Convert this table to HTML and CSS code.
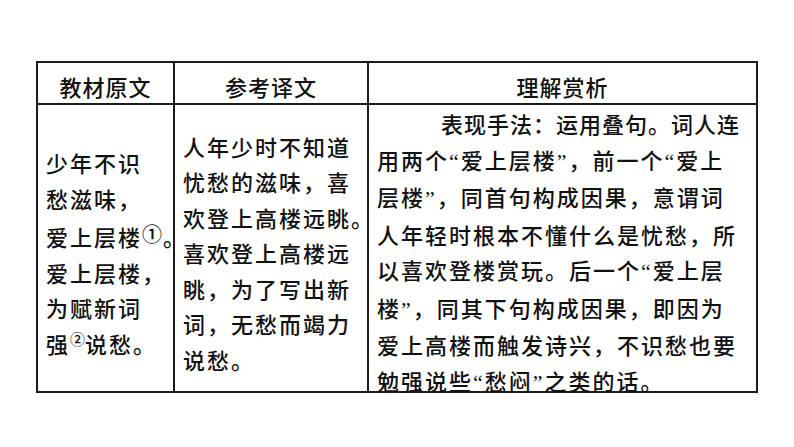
FILE: index.html
```html
<!DOCTYPE html>
<html lang="zh-CN">
<head>
<meta charset="utf-8">
<title>教材原文</title>
<link rel="stylesheet" href="styles.css">
</head>
<body>
<div class="table">
  <div class="head">教材原文</div>
  <div class="head">参考译文</div>
  <div class="head">理解赏析</div>
  <div class="cell c1">
    <div class="lines">
      <div>少年不识</div>
      <div>愁滋味，</div>
      <div>爱上层楼<span class="note">①</span>。</div>
      <div>爱上层楼，</div>
      <div>为赋新词</div>
      <div>强<sup class="sup">②</sup>说愁。</div>
    </div>
  </div>
  <div class="cell c2">
    <div class="lines">
      <div>人年少时不知道</div>
      <div>忧愁的滋味，喜</div>
      <div>欢登上高楼远眺。</div>
      <div>喜欢登上高楼远</div>
      <div>眺，为了写出新</div>
      <div>词，无愁而竭力</div>
      <div>说愁。</div>
    </div>
  </div>
  <div class="cell c3">
    <div class="lines">
      <div class="indent">表现手法：运用叠句。词人连</div>
      <div>用两个<span class="q">“</span>爱上层楼<span class="q">”</span>，前一个<span class="q">“</span>爱上</div>
      <div>层楼<span class="q">”</span>，同首句构成因果，意谓词</div>
      <div>人年轻时根本不懂什么是忧愁，所</div>
      <div>以喜欢登楼赏玩。后一个<span class="q">“</span>爱上层</div>
      <div>楼<span class="q">”</span>，同其下句构成因果，即因为</div>
      <div>爱上高楼而触发诗兴，不识愁也要</div>
      <div>勉强说些<span class="q">“</span>愁闷<span class="q">”</span>之类的话。</div>
    </div>
  </div>
</div>
</body>
</html>
```

FILE: styles.css
```css
html, body {
  margin: 0;
  padding: 0;
  background: #ffffff;
}

body {
  font-family: "Noto Sans CJK SC", "Noto Sans", sans-serif;
  color: #111111;
}

.table {
  margin: 61px 0 0 36px;
  width: 722px;
  box-sizing: border-box;
  padding: 2px;
  display: grid;
  grid-template-columns: 135px 192px 387px;
  grid-template-rows: 40px 286px;
  gap: 2px;
  background: #1c1c1c;
}

.head {
  background: #ffffff;
  display: flex;
  align-items: center;
  justify-content: center;
  font-size: 22px;
  font-weight: 500;
  letter-spacing: 1px;
  padding-top: 6px;
  box-sizing: border-box;
}

.cell {
  background: #ffffff;
  display: flex;
  align-items: center;
  padding: 10px 0 0 8px;
  box-sizing: border-box;
  overflow: visible;
}

.lines {
  font-size: 22px;
  font-weight: 500;
  letter-spacing: 2px;
  line-height: 35.5px;
  white-space: nowrap;
}

.indent {
  padding-left: 64px;
  letter-spacing: 1px;
}

.q {
  font-family: "Liberation Serif", serif;
  letter-spacing: 2px;
}

.note {
  font-size: 20px;
  letter-spacing: 0;
  vertical-align: 4px;
  margin-right: 1px;
}

.sup {
  font-size: 15px;
  letter-spacing: 0;
  vertical-align: 8px;
  line-height: 0;
}
```
